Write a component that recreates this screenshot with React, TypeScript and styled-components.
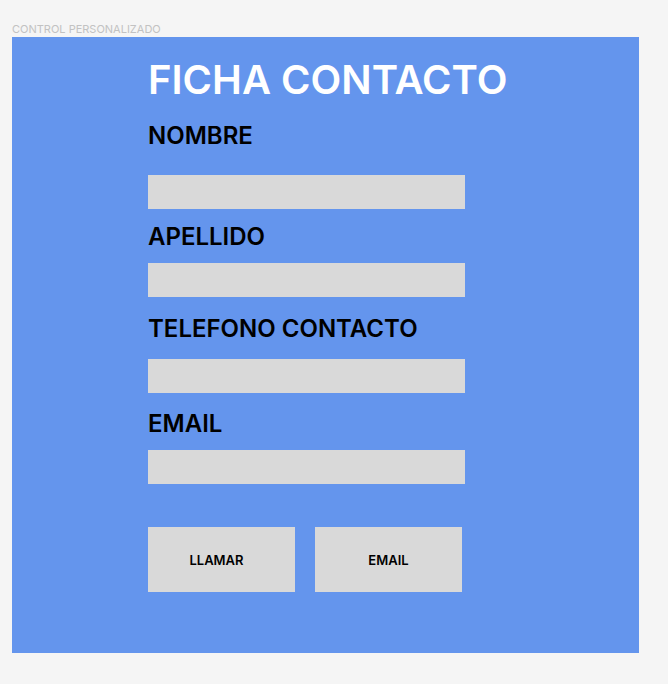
import styled, { createGlobalStyle } from "styled-components";

const GlobalStyle = createGlobalStyle`
  html, body {
    margin: 0;
    padding: 0;
    background: #f5f5f5;
    font-family: Inter, "Noto Sans", sans-serif;
  }
`;

const fields = ["NOMBRE", "APELLIDO", "TELEFONO CONTACTO", "EMAIL"];

// gaps taken from the layout: label -> input, input -> next label
const labelGaps = [17, 13, 17, 16];
const inputGaps = [25, 12, 16, 12];

export default function App() {
  return (
    <>
      <GlobalStyle />
      <Page>
        <Caption>CONTROL PERSONALIZADO</Caption>
        <Panel>
          <Title>FICHA CONTACTO</Title>
          {fields.map((field, i) => (
            <Field key={field}>
              <Label $top={labelGaps[i]}>{field}</Label>
              <Input $top={inputGaps[i]} />
            </Field>
          ))}
          <Actions>
            <ActionButton $shift={10}>LLAMAR</ActionButton>
            <ActionButton>EMAIL</ActionButton>
          </Actions>
        </Panel>
      </Page>
    </>
  );
}

const Page = styled.div`
  padding: 22px 12px 31px;
`;

const Caption = styled.div`
  font-size: 11px;
  line-height: 14px;
  color: #c2c2c2;
  margin-bottom: 1px;
`;

const Panel = styled.div`
  width: 627px;
  box-sizing: border-box;
  background: #6495ed;
  padding: 19px 0 61px 136px;
  display: flex;
  flex-direction: column;
`;

const Title = styled.h1`
  margin: 0;
  font-size: 40px;
  line-height: 48px;
  font-weight: 600;
  color: #ffffff;
`;

const Field = styled.div`
  display: flex;
  flex-direction: column;
`;

const Label = styled.label<{ $top: number }>`
  margin-top: ${(p) => p.$top}px;
  font-size: 24px;
  line-height: 29px;
  font-weight: 600;
  color: #000000;
`;

const Input = styled.div<{ $top: number }>`
  margin-top: ${(p) => p.$top}px;
  width: 317px;
  height: 34px;
  background: #d9d9d9;
`;

const Actions = styled.div`
  display: flex;
  gap: 20px;
  margin-top: 43px;
`;

const ActionButton = styled.button<{ $shift?: number }>`
  width: 147px;
  height: 65px;
  border: none;
  background: #d9d9d9;
  font-family: Inter, "Noto Sans", sans-serif;
  font-size: 13px;
  font-weight: 600;
  color: #000000;
  padding: 0 ${(p) => p.$shift ?? 0}px 0 0;
  cursor: pointer;
`;
